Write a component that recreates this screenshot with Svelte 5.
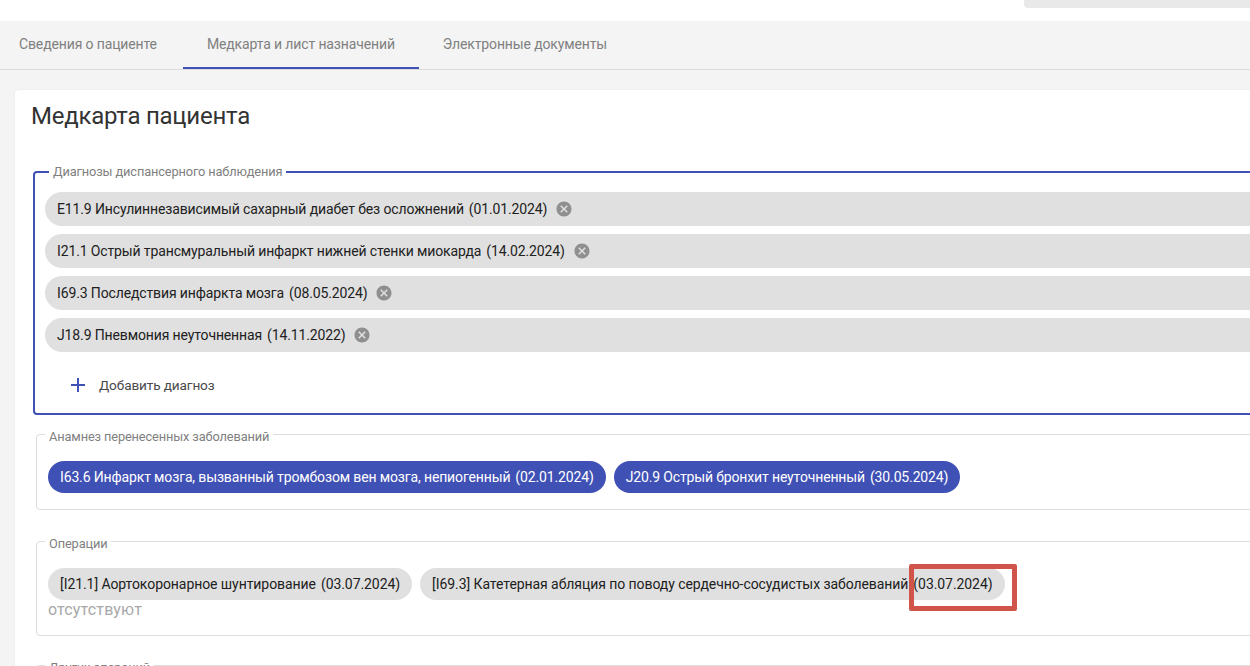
<script>
  const tabs = ['Сведения о пациенте', 'Медкарта и лист назначений', 'Электронные документы'];
  let activeTab = $state(1);

  let diagnoses = $state([
    { name: 'E11.9 Инсулиннезависимый сахарный диабет без осложнений', date: '01.01.2024' },
    { name: 'I21.1 Острый трансмуральный инфаркт нижней стенки миокарда', date: '14.02.2024' },
    { name: 'I69.3 Последствия инфаркта мозга', date: '08.05.2024' },
    { name: 'J18.9 Пневмония неуточненная', date: '14.11.2022' }
  ]);

  const history = [
    { name: 'I63.6 Инфаркт мозга, вызванный тромбозом вен мозга, непиогенный', date: '02.01.2024' },
    { name: 'J20.9 Острый бронхит неуточненный', date: '30.05.2024' }
  ];

  const operations = [
    { name: '[I21.1] Аортокоронарное шунтирование', date: '03.07.2024' },
    { name: '[I69.3] Катетерная абляция по поводу сердечно-сосудистых заболеваний', date: '03.07.2024' }
  ];

  function removeDiagnosis(i) {
    diagnoses.splice(i, 1);
  }
</script>

<div class="topbar">
  <div class="top-box"></div>
</div>

<nav class="tabs">
  {#each tabs as tab, i}
    <button class="tab" class:active={i === activeTab} onclick={() => (activeTab = i)}>{tab}</button>
  {/each}
</nav>

<main class="content">
  <section class="card">
    <h1>Медкарта пациента</h1>

    <fieldset class="group focused">
      <legend>Диагнозы диспансерного наблюдения</legend>
      <div class="rows">
        {#each diagnoses as d, i}
          <div class="chip row">
            <span>{d.name}</span>
            <span class="date">({d.date})</span>
            <button class="remove" aria-label="Удалить" onclick={() => removeDiagnosis(i)}>
              <svg viewBox="0 0 24 24" width="18" height="18">
                <path fill="#8f8f8f" d="M12 2C6.47 2 2 6.47 2 12s4.47 10 10 10 10-4.47 10-10S17.53 2 12 2zm5 13.59L15.59 17 12 13.41 8.41 17 7 15.59 10.59 12 7 8.41 8.41 7 12 10.59 15.59 7 17 8.41 13.41 12 17 15.59z"/>
              </svg>
            </button>
          </div>
        {/each}
      </div>
      <button class="add">
        <svg viewBox="0 0 16 16" width="16" height="16">
          <path fill="#3f51b5" d="M7 1h2v6h6v2H9v6H7V9H1V7h6z"/>
        </svg>
        <span>Добавить диагноз</span>
      </button>
    </fieldset>

    <fieldset class="group plain history">
      <legend>Анамнез перенесенных заболеваний</legend>
      <div class="chips">
        {#each history as h}
          <div class="chip blue">
            <span>{h.name}</span>
            <span class="date">({h.date})</span>
          </div>
        {/each}
      </div>
    </fieldset>

    <fieldset class="group plain operations">
      <legend>Операции</legend>
      <div class="chips">
        {#each operations as o}
          <div class="chip">
            <span>{o.name}</span>
            <span class="date">({o.date})</span>
          </div>
        {/each}
        <div class="highlight"></div>
      </div>
      <div class="empty">отсутствуют</div>
    </fieldset>

    <fieldset class="group plain last">
      <legend>Других операций</legend>
    </fieldset>
  </section>
</main>

<style>
  :global(body) {
    background: #f4f4f4;
    font-family: Roboto, "Liberation Sans", sans-serif;
    overflow: hidden;
    height: 666px;
  }

  .topbar {
    height: 21px;
    background: #fff;
    display: flex;
    justify-content: flex-end;
    align-items: flex-start;
  }

  .top-box {
    width: 226px;
    height: 8px;
    background: #e9e9e9;
    border-bottom-left-radius: 4px;
  }

  .tabs {
    display: flex;
    height: 49px;
    box-sizing: border-box;
    border-bottom: 1px solid #dcdcdc;
  }

  .tab {
    height: 48px;
    padding: 0 24px;
    border: none;
    background: none;
    border-bottom: 2px solid transparent;
    font: 14px Roboto, sans-serif;
    letter-spacing: -0.13px;
    color: #808080;
    cursor: pointer;
  }

  .tab:first-child {
    padding-left: 19px;
    padding-right: 26px;
  }

  .tab.active {
    border-bottom-color: #3f51b5;
  }

  .content {
    padding: 20px 0 0 15px;
  }

  .card {
    width: 1400px;
    background: #fff;
    border-radius: 4px;
    box-shadow: 0 0 2px rgba(0, 0, 0, 0.08);
    padding: 1px 16px 16px;
    box-sizing: border-box;
    height: 700px;
  }

  h1 {
    margin: 11px 0 35px;
    font-size: 24px;
    font-weight: 400;
    letter-spacing: -0.24px;
    line-height: 28px;
    color: #333;
  }

  .group {
    margin: 0;
    min-width: 0;
  }

  legend {
    font-size: 12.8px;
    letter-spacing: -0.13px;
    line-height: 14px;
    color: #808080;
    padding: 0 4px;
  }

  .focused {
    margin-left: 2px;
    height: 250px;
    box-sizing: border-box;
    border: 2px solid #3f51b5;
    border-radius: 4px;
    padding: 13px 10px 0;
  }

  .focused legend {
    margin-left: 4px;
  }

  .plain {
    margin-left: 5px;
    border: 1px solid #dddddd;
    border-radius: 4px;
    padding: 0 11px;
    box-sizing: border-box;
  }

  .plain legend {
    margin-left: -3px;
    padding-top: 5px;
  }

  .history {
    margin-top: 10px;
    height: 85px;
    padding-top: 17px;
  }

  .operations {
    margin-top: 22px;
    height: 104px;
    padding-top: 17px;
  }

  .operations .chip {
    letter-spacing: -0.07px;
  }

  .last {
    margin-top: 20px;
    height: 60px;
  }

  .rows {
    display: flex;
    flex-direction: column;
    gap: 8px;
  }

  .chips {
    display: flex;
    gap: 8px;
    position: relative;
  }

  .chip {
    display: flex;
    align-items: center;
    gap: 5px;
    height: 32px;
    padding: 0 12px;
    border-radius: 16px;
    background: #e0e0e0;
    font-size: 14px;
    letter-spacing: -0.13px;
    color: #212121;
    white-space: nowrap;
  }

  .chip.row {
    height: 34px;
    border-radius: 17px;
  }

  .chip.blue {
    background: #3f51b5;
    color: #fff;
    letter-spacing: -0.14px;
  }

  .remove {
    display: flex;
    padding: 0;
    margin-left: 3px;
    border: none;
    background: none;
    cursor: pointer;
  }

  .add {
    display: flex;
    align-items: center;
    gap: 13px;
    margin: 16px 0 0 15px;
    height: 34px;
    padding: 0 10px;
    border: none;
    background: none;
    font: 13.6px Roboto, sans-serif;
    letter-spacing: -0.12px;
    color: #4a4a4a;
    cursor: pointer;
  }

  .empty {
    font-size: 16px;
    letter-spacing: 0.15px;
    line-height: 19px;
    color: #a8a8a8;
  }

  /* red annotation box drawn over the screenshot */
  .highlight {
    position: absolute;
    left: 861px;
    top: -4px;
    width: 108px;
    height: 47px;
    box-sizing: border-box;
    border: 5px solid #d0544a;
    border-radius: 2px;
  }
</style>
